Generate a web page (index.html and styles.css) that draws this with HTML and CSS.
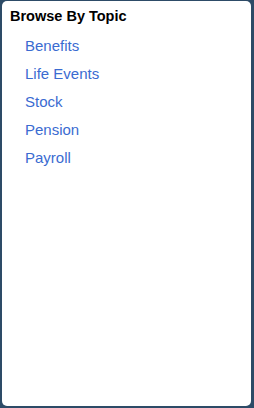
FILE: index.html
```html
<!DOCTYPE html>
<html>
<head>
<meta charset="utf-8">
<link rel="stylesheet" href="styles.css">
</head>
<body>
<div class="card">
  <h1 class="title">Browse By Topic</h1>
  <ul class="topics">
    <li><a href="#">Benefits</a></li>
    <li><a href="#">Life Events</a></li>
    <li><a href="#">Stock</a></li>
    <li><a href="#">Pension</a></li>
    <li><a href="#">Payroll</a></li>
  </ul>
</div>
</body>
</html>
```
FILE: styles.css
```css
html, body {
  margin: 0;
  padding: 0;
  background: #2d4b67;
  height: 408px;
  overflow: hidden;
}
body {
  padding: 1px 3px 2px 2px;
  box-sizing: border-box;
  font-family: "Liberation Sans", Arial, sans-serif;
}
.card {
  background: #ffffff;
  height: 405px;
  border-radius: 5px;
  box-sizing: border-box;
  padding: 7px 0 0 8px;
}
.title {
  margin: 0;
  font-size: 14.5px;
  font-weight: bold;
  color: #000;
  line-height: 16px;
}
.topics {
  list-style: none;
  margin: 13px 0 0 0;
  padding: 0 0 0 15px;
}
.topics li {
  height: 28px;
  line-height: 18px;
}
.topics a {
  color: #3a6bd1;
  text-decoration: none;
  font-size: 15px;
}
```
